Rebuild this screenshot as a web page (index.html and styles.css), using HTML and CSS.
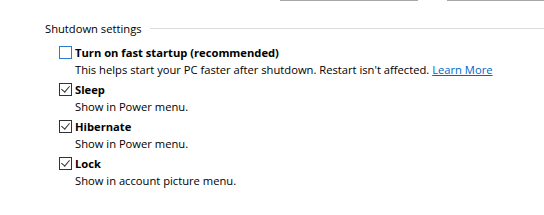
FILE: index.html
```html
<!DOCTYPE html>
<html>
<head>
	<title>Shutdown settings</title>
	<link rel="stylesheet" href="styles.css">
</head>
<body>
	<div class="top-edge">
		<span class="edge edge-left"></span>
		<span class="edge edge-right"></span>
	</div>

	<section class="group">
		<div class="group-title">
			<span>Shutdown settings</span>
			<div class="rule"></div>
		</div>

		<ul class="options">
			<li class="option">
				<label class="row"><span class="box focus"></span><span class="name">Turn on fast startup (recommended)</span></label>
				<p class="desc">This helps start your PC faster after shutdown. Restart isn't affected. <a href="#">Learn More</a></p>
			</li>
			<li class="option">
				<label class="row"><span class="box checked"></span><span class="name">Sleep</span></label>
				<p class="desc">Show in Power menu.</p>
			</li>
			<li class="option">
				<label class="row"><span class="box checked"></span><span class="name">Hibernate</span></label>
				<p class="desc">Show in Power menu.</p>
			</li>
			<li class="option">
				<label class="row"><span class="box checked"></span><span class="name">Lock</span></label>
				<p class="desc">Show in account picture menu.</p>
			</li>
		</ul>
	</section>
</body>
</html>
```

FILE: styles.css
```css
body {
	margin: 0;
	background: #fff;
	font-family: "Open Sans", "Noto Sans", sans-serif;
	font-size: 11.2px;
	color: #000;
}

.top-edge {
	display: flex;
	height: 1px;
}
.edge {
	display: block;
	height: 1px;
	background: #a8a8a8;
}
.edge-left {
	margin-left: 280px;
	width: 138px;
}
.edge-right {
	margin-left: 29px;
	flex: 1;
}

.group {
	padding: 18px 0 0 45px;
}

.group-title {
	display: flex;
	align-items: center;
	height: 18px;
}
.group-title .rule {
	flex: 1;
	height: 1px;
	margin-left: 8px;
	background: #dcdcdc;
}

.options {
	list-style: none;
	margin: 6px 0 0 14px;
	padding: 0;
}
.option {
	margin-bottom: 1px;
}

.row {
	display: flex;
	align-items: center;
	height: 18px;
}
.name {
	font-weight: bold;
	margin-left: 3px;
}

.box {
	position: relative;
	width: 11px;
	height: 11px;
	border: 1px solid #333;
	background: #fff;
}
.box.focus {
	border-color: #2b7cd3;
}
/* the tick is two borders of a rotated box */
.box.checked::after {
	content: '';
	position: absolute;
	left: 3px;
	top: 0px;
	width: 4px;
	height: 7px;
	border-right: 1px solid #333;
	border-bottom: 1px solid #333;
	transform: rotate(40deg);
}

.desc {
	margin: 0 0 0 16px;
	height: 18px;
	line-height: 18px;
}
.desc a {
	color: #0066cc;
}
```
